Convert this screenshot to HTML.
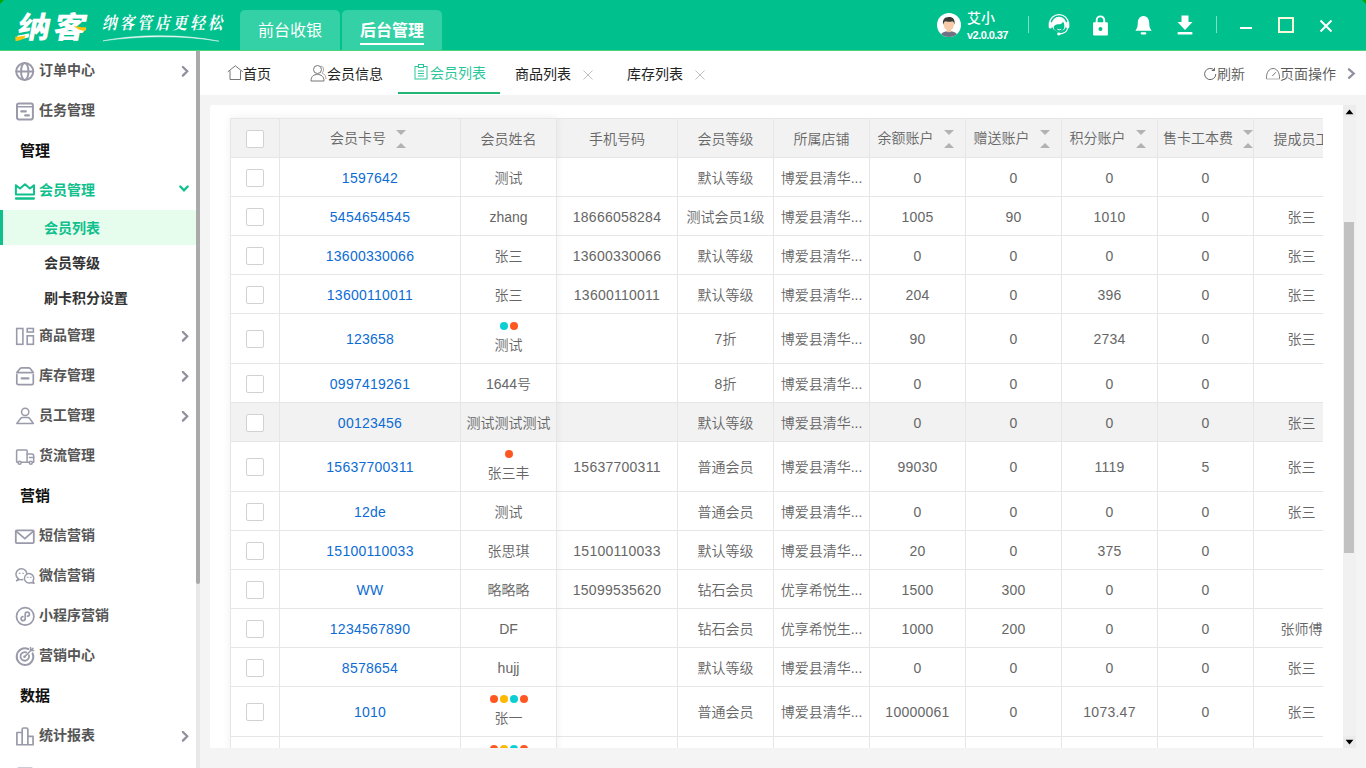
<!DOCTYPE html>
<html lang="zh-CN">
<head>
<meta charset="utf-8">
<title>纳客 - 会员列表</title>
<style>
*{box-sizing:border-box;margin:0;padding:0}
html,body{width:1366px;height:768px;overflow:hidden;background:#f4f4f4;font-family:"Liberation Sans","Noto Sans CJK SC",sans-serif;font-size:14px;color:#666;font-weight:350}
body{position:relative}
a{text-decoration:none;color:inherit}
ul{list-style:none}
#header{position:absolute;left:0;top:0;width:1366px;height:50px;background:#00c08d;overflow:hidden}
#hline{position:absolute;left:0;top:50px;width:1366px;height:1px;background:#4fd47e}
.htab{position:absolute;top:10px;height:40px;width:100px;background:#33d1a5;border-radius:5px 5px 0 0;color:#fff;font-size:16px;line-height:42px;text-align:center;font-weight:400}
.htab.on{font-weight:bold}
.htab.on i{position:absolute;left:18px;top:33px;width:64px;height:2px;background:#fff}
#logo{position:absolute;left:14px;top:4px;height:44px;line-height:44px;font-family:"Liberation Sans","Noto Sans CJK SC",sans-serif;font-weight:900;font-size:33px;color:#fff;letter-spacing:3px;white-space:nowrap;transform:scaleY(.91) skewX(-10deg);transform-origin:0 100%}
#slogan{position:absolute;left:102px;top:11px;height:26px;line-height:26px;transform:scaleX(.86);transform-origin:0 50%;font-family:"Liberation Serif","Noto Serif CJK SC",serif;font-style:italic;font-weight:700;font-size:17px;color:#fff;letter-spacing:3.5px;white-space:nowrap}
#user{position:absolute;left:967px;top:9px;color:#fff;white-space:nowrap}
#user b{display:block;font-weight:500;font-size:14px;line-height:18px}
#user span{display:block;font-size:11px;line-height:14px;letter-spacing:-0.55px;font-weight:bold;margin-top:1px}
.vsep{position:absolute;top:16px;width:1px;height:17px;background:#7fdfc4}
#sidebar{position:absolute;left:0;top:51px;width:196px;height:717px;background:#fff;overflow:hidden}
.mi{position:absolute;left:0;width:196px;height:40px;line-height:41px;font-weight:bold;color:#555;font-size:14px}
.mi .t{position:absolute;left:39px;top:0;white-space:nowrap}
.mi svg.ic{position:absolute;left:13px;top:9px;width:24px;height:24px}
.mi svg.ch{position:absolute;left:177px;top:13px;width:16px;height:16px}
.mi.on{color:#0fc08c}
.sec{position:absolute;left:20px;font-size:15px;font-weight:bold;color:#111;height:40px;line-height:41px}
.sub{position:absolute;left:0;width:196px;height:35px;line-height:36px;font-weight:bold;color:#333}
.sub .t{position:absolute;left:44px;top:0;white-space:nowrap}
.sub.on{background:#e6fcec;color:#0fc08c}
.sub.on i{position:absolute;left:0;top:0;width:3px;height:35px;background:#0fc08c}
#sbtrack{position:absolute;left:196px;top:51px;width:4px;height:717px;background:#e8e8e8}
#sbthumb{position:absolute;left:196px;top:51px;width:4px;height:533px;background:#aaa;border-radius:0 0 2px 2px}
#tabs{position:absolute;left:200px;top:51px;width:1166px;height:44px;background:#fff}
.tb{position:absolute;top:0;height:44px;line-height:47px;color:#222;font-size:14px;white-space:nowrap;font-weight:400}
.tb.r{color:#555;font-weight:350}
.tb.on{color:#2bc79b;line-height:45px}
.tbi{position:absolute}
#tabul{position:absolute;left:198px;top:41px;width:102px;height:2px;background:#22b573}
#panel{position:absolute;left:210px;top:105px;width:1133px;height:643px;background:#fff;border-radius:2px 0 0 2px;overflow:hidden}
#tw{position:absolute;left:20px;top:13px;width:1093px;height:630px;overflow:hidden;border-left:1px solid #e6e6e6;border-top:1px solid #e6e6e6}
#fx{position:absolute;left:20px;top:13px;width:327px;height:640px;box-shadow:0 -1px 8px rgba(0,0,0,.06);pointer-events:none}
table{border-collapse:separate;border-spacing:0;table-layout:fixed;width:1119px}
th,td{border-right:1px solid #e6e6e6;border-bottom:1px solid #e6e6e6;height:39px;text-align:center;font-weight:350;font-size:14px;color:#666;white-space:nowrap;overflow:hidden;padding:2px 5px 0;position:relative;vertical-align:middle;line-height:20px}
th{background:#f2f2f2}
tr.tag td{height:50px;padding-top:1px}
tr.hov td{background:#f2f2f2}
td.lk{color:#0c6cd4}
td.n,td.lk{letter-spacing:.25px}
.cb{display:inline-block;width:18px;height:18px;border:1px solid #d2d2d2;border-radius:2px;background:#fff;vertical-align:middle;position:relative;top:-1px}
.srt{display:inline-block;position:relative;width:10px;height:20px;margin-left:10px;margin-right:4px;vertical-align:middle;top:-1px}
.srt:before{content:"";position:absolute;left:0;top:1px;border:5px solid transparent;border-bottom:0;border-top-color:#b2b2b2}
.srt:after{content:"";position:absolute;left:0;top:14px;border:5px solid transparent;border-top:0;border-bottom-color:#b2b2b2}
.dots{position:absolute;left:0;top:8px;width:100%;height:8px;line-height:8px;font-size:0}
.dots i{display:inline-block;width:8px;height:8px;border-radius:50%;margin:0 1px}
.nm{position:absolute;left:0;top:21px;width:100%;height:20px;line-height:20px}
.c-o{background:#ff5722}.c-c{background:#0ccfd3}.c-y{background:#ffb800}
#vtrack{position:absolute;left:1343px;top:105px;width:13px;height:643px;background:#f1f1f1}
.vbtn{position:absolute;left:1343px;width:13px;height:12px;background:#ececec}
#vthumb{position:absolute;left:1344px;top:222px;width:10px;height:331px;background:#c1c1c1}
</style>
</head>
<body>

<div id="header">
  <div id="logo">纳客</div>
  <div id="slogan">纳客管店更轻松</div>
  <svg style="position:absolute;left:14px;top:24px" width="74" height="18" viewBox="0 0 74 18"><path d="M1.3 12.6 C4.5 12.8 8 12.3 11.5 11.5 L10.5 14 C7.5 16 4 17 1.5 16.9 Z" fill="#ffc20e"/><path d="M59.6 2.3 C63 1.5 66 4 72.1 3.2 L71.5 6.5 C66.5 7.5 63.5 4.5 59.6 2.3 Z" fill="#ffc20e"/></svg>
  <svg style="position:absolute;left:100px;top:32px" width="130" height="12" viewBox="0 0 130 12"><path d="M3 8.8 C 35 2.5, 80 1.3, 119 9.2 C 80 2.8, 40 4, 3 8.8 Z" fill="#fff" stroke="#fff" stroke-width=".5" stroke-linejoin="round" opacity=".92"/></svg>
  <div class="htab" style="left:240px">前台收银</div>
  <div class="htab on" style="left:342px">后台管理<i></i></div>
  <svg style="position:absolute;left:937px;top:13px" width="24" height="24" viewBox="0 0 24 24">
    <defs><clipPath id="avc"><circle cx="12" cy="12" r="12"/></clipPath></defs>
    <circle cx="12" cy="12" r="12" fill="#fff"/>
    <g clip-path="url(#avc)">
      <path d="M3.5 24 C3.5 19.5 7 18.2 12 18.2 C17 18.2 20.5 19.5 20.5 24 Z" fill="#6f7285"/>
      <rect x="10" y="15.5" width="4" height="3.6" fill="#f2c19e"/>
      <ellipse cx="11.8" cy="11.6" rx="5.2" ry="5.8" fill="#f7cba7"/>
      <path d="M6.2 11.8 C5 6.5 8 3.8 12 4 C15.5 3.8 18.5 6 17.4 11.8 C16.9 9.8 16.5 8.8 15.5 8.2 C13 9 9.5 8.7 8 8.2 C7 9 6.6 10 6.2 11.8 Z" fill="#3a3a3a"/>
    </g>
  </svg>
  <div id="user"><b>艾小</b><span>v2.0.0.37</span></div>
  <div class="vsep" style="left:1028px"></div>
  <svg style="position:absolute;left:1047px;top:12px" width="24" height="26" viewBox="0 0 24 26">
    <path d="M2.6 11.6 A9.4 9 0 0 1 21.4 11.6" fill="none" stroke="#fff" stroke-width="1.2"/>
    <circle cx="12" cy="12.2" r="7.4" fill="#fff"/>
    <path d="M6.7 14.8 C7.5 12.6 10 12.3 12.5 12.3 C14.5 12.2 15.6 11 16 9.6 C17 11 17.6 13 17.3 15 C17 17.8 15 20 12 20 C9 20 6.5 17.8 6.7 14.8 Z" fill="#00c08d"/>
    <path d="M10.3 17.2 Q12.2 18.6 14.2 17.2" fill="none" stroke="#fff" stroke-width="1"/>
    <rect x="1.7" y="9.8" width="3.2" height="6.6" rx="1.3" fill="#fff"/>
    <rect x="19.1" y="9.8" width="3.2" height="6.6" rx="1.3" fill="#fff"/>
    <path d="M20.6 16 C20.3 19.5 16.5 21.6 12.5 21.9" fill="none" stroke="#fff" stroke-width="1.2"/>
    <ellipse cx="11.8" cy="22" rx="1.7" ry="1.4" fill="#fff"/>
  </svg>
  <svg style="position:absolute;left:1090px;top:12px" width="22" height="26" viewBox="0 0 22 26">
    <path d="M6.65 11 V8.2 a3.8 3.8 0 0 1 7.6 0 V11" fill="none" stroke="#fff" stroke-width="1.9"/>
    <rect x="3" y="10.3" width="14.9" height="13.2" rx="1.3" fill="#fff"/>
    <circle cx="10.45" cy="16.9" r="2" fill="#00c08d"/>
  </svg>
  <svg style="position:absolute;left:1131.5px;top:12.5px" width="23" height="25" viewBox="0 0 24 26">
    <path d="M12 3 C7.5 3 6 7 6 11 C6 15 5 16.5 3.5 18.5 L20.5 18.5 C19 16.5 18 15 18 11 C18 7 16.5 3 12 3 Z" fill="#fff"/>
    <rect x="9" y="20" width="6" height="2.4" rx="1.2" fill="#fff"/>
  </svg>
  <svg style="position:absolute;left:1173px;top:12px" width="24" height="26" viewBox="0 0 24 26">
    <path d="M8.5 3.5 H15.5 V10 H19.5 L12 18 L4.5 10 H8.5 Z" fill="#fff"/>
    <rect x="4.5" y="20" width="15" height="2.5" rx="1" fill="#fff"/>
  </svg>
  <div class="vsep" style="left:1216px"></div>
  <div style="position:absolute;left:1240px;top:27px;width:12px;height:2px;background:#fff"></div>
  <div style="position:absolute;left:1278px;top:17px;width:16px;height:16px;border:2px solid #f6fbdc"></div>
  <svg style="position:absolute;left:1319px;top:19px" width="14" height="14" viewBox="0 0 14 14"><path d="M1.5 1.5 L12.5 12.5 M12.5 1.5 L1.5 12.5" stroke="#fff" stroke-width="2" fill="none"/></svg>
  <svg style="position:absolute;left:0;top:0" width="4" height="4" viewBox="0 0 5 5"><path d="M0 0 H5 L0 5 Z" fill="#00a800"/></svg>
  <svg style="position:absolute;left:1362px;top:0" width="4" height="4" viewBox="0 0 5 5"><path d="M0 0 H5 V5 Z" fill="#00a800"/></svg>
</div>
<div id="hline"></div>

<div id="sidebar">
<div class="mi" style="top:-1px"><svg class="ic" viewBox="0 0 24 24" fill="none" stroke="#9a9aab" stroke-width="2" stroke-linecap="round" stroke-linejoin="round"><circle cx="11.75" cy="12.45" r="8.5"/><ellipse cx="11.75" cy="12.45" rx="3.7" ry="8.5"/><path d="M3.3 12.45 H20.2"/></svg><span class="t">订单中心</span><svg class="ch" viewBox="0 0 16 16" fill="none" stroke="#9090a0" stroke-width="2.3" stroke-linecap="round" stroke-linejoin="miter"><path d="M5.9 4 L10.2 8.3 L5.9 12.6"/></svg></div>
<div class="mi" style="top:39px"><svg class="ic" viewBox="0 0 24 24" fill="none" stroke="#9a9aab" stroke-width="2" stroke-linecap="round" stroke-linejoin="round"><rect x="4" y="4.4" width="15.9" height="16" rx="1.8"/><path d="M4 7.7 H19.9" stroke-width="1.6"/><path d="M8.3 12.4 H12.8 M12.2 16.4 H15.9" stroke-width="2.2"/></svg><span class="t">任务管理</span></div>
<div class="sec" style="top:79px">管理</div>
<div class="mi on" style="top:119px"><svg class="ic" viewBox="0 0 24 24" fill="none" stroke="#0fc08c" stroke-width="2" stroke-linecap="round" stroke-linejoin="round"><path d="M2.9 6.2 V15.5 H21 V6.2 L16.9 9.5 L12 5.3 L7 9.5 Z"/><path d="M3.2 19.45 H20.7" stroke-width="2.6"/></svg><span class="t">会员管理</span><svg class="ch" viewBox="0 0 16 16" fill="none" stroke="#0fc08c" stroke-width="2.3" stroke-linecap="round" stroke-linejoin="miter"><path d="M3.3 3.5 L7 7.3 L10.7 3.5"/></svg></div>
<div class="sub on" style="top:159px"><i></i><span class="t">会员列表</span></div>
<div class="sub" style="top:194px"><span class="t">会员等级</span></div>
<div class="sub" style="top:229px"><span class="t">刷卡积分设置</span></div>
<div class="mi" style="top:264px"><svg class="ic" viewBox="0 0 24 24" fill="none" stroke="#9a9aab" stroke-width="2" stroke-linecap="round" stroke-linejoin="round"><g stroke-width="1.6" stroke-linejoin="miter"><rect x="3.7" y="4.5" width="6.2" height="15.8"/><rect x="14.2" y="4.5" width="6.2" height="3.5"/><rect x="14.2" y="11.8" width="6.2" height="8.5"/></g></svg><span class="t">商品管理</span><svg class="ch" viewBox="0 0 16 16" fill="none" stroke="#9090a0" stroke-width="2.3" stroke-linecap="round" stroke-linejoin="miter"><path d="M5.9 4 L10.2 8.3 L5.9 12.6"/></svg></div>
<div class="mi" style="top:304px"><svg class="ic" viewBox="0 0 24 24" fill="none" stroke="#9a9aab" stroke-width="2" stroke-linecap="round" stroke-linejoin="round"><g stroke-width="1.7"><path d="M3.8 8.6 L7.3 4.3 Q7.8 3.9 8.5 3.9 H15.8 Q16.5 3.9 17 4.3 L20.3 8.6 Z"/><path d="M3.8 10.6 V19.2 a1.5 1.5 0 0 0 1.5 1.5 H18.8 a1.5 1.5 0 0 0 1.5 -1.5 V10.6"/></g><path d="M8.7 14.4 H15.4" stroke-width="2.3"/></svg><span class="t">库存管理</span><svg class="ch" viewBox="0 0 16 16" fill="none" stroke="#9090a0" stroke-width="2.3" stroke-linecap="round" stroke-linejoin="miter"><path d="M5.9 4 L10.2 8.3 L5.9 12.6"/></svg></div>
<div class="mi" style="top:344px"><svg class="ic" viewBox="0 0 24 24" fill="none" stroke="#9a9aab" stroke-width="2" stroke-linecap="round" stroke-linejoin="round"><g stroke-width="1.5"><circle cx="12.2" cy="7.85" r="3.65"/><path d="M3.8 19.5 L7.8 14.2 Q8.3 13.6 9.3 13.6 H15 Q16 13.6 16.5 14.2 L20.4 19.5 Z"/></g></svg><span class="t">员工管理</span><svg class="ch" viewBox="0 0 16 16" fill="none" stroke="#9090a0" stroke-width="2.3" stroke-linecap="round" stroke-linejoin="miter"><path d="M5.9 4 L10.2 8.3 L5.9 12.6"/></svg></div>
<div class="mi" style="top:384px"><svg class="ic" viewBox="0 0 24 24" fill="none" stroke="#9a9aab" stroke-width="2" stroke-linecap="round" stroke-linejoin="round"><g stroke-width="1.5"><rect x="3.6" y="5.9" width="10.5" height="12.3" rx=".8"/><path d="M14.1 9.9 H18.7 a2 2 0 0 1 2 2 V18.2 H14.1"/><path d="M16.5 13.6 H20.7"/><circle cx="6.6" cy="18.7" r="1.5" fill="#fff"/><circle cx="17.8" cy="18.7" r="1.5" fill="#fff"/></g></svg><span class="t">货流管理</span></div>
<div class="sec" style="top:424px">营销</div>
<div class="mi" style="top:464px"><svg class="ic" viewBox="0 0 24 24" fill="none" stroke="#9a9aab" stroke-width="2" stroke-linecap="round" stroke-linejoin="round"><g stroke-width="1.8"><rect x="2.8" y="6.4" width="18" height="12.7" rx="1"/><path d="M3.4 7.4 L11.8 14.6 L20.2 7.4" stroke-linejoin="miter"/></g></svg><span class="t">短信营销</span></div>
<div class="mi" style="top:504px"><svg class="ic" viewBox="0 0 24 24" fill="none" stroke="#9a9aab" stroke-width="2" stroke-linecap="round" stroke-linejoin="round"><g stroke-width="1.5"><path d="M5.25 14.7 A5.5 5.5 0 1 1 13.82 9.25"/><path d="M5.25 14.7 L3.6 16.8 L6.52 15.37 A5.5 5.5 0 0 0 9.82 15.51"/><path d="M19.95 17 A4.7 4.7 0 1 0 18.09 18.56 L21 19.4 Z"/><path d="M6.2 9.3 H7.2 M9.7 9.3 H10.7 M14.2 13.3 H15.2 M17.3 13.3 H18.3" stroke-width="1.1"/></g></svg><span class="t">微信营销</span></div>
<div class="mi" style="top:544px"><svg class="ic" viewBox="0 0 24 24" fill="none" stroke="#9a9aab" stroke-width="2" stroke-linecap="round" stroke-linejoin="round"><circle cx="12.2" cy="12.4" r="8.7" stroke-width="1.7"/><path d="M12.2 14.9 V10.3 a2.1 2.1 0 0 1 4.2 0 a1.9 1.9 0 0 1 -1.9 1.9 M12.2 10 V14.6 a2.1 2.1 0 0 1 -4.2 0 a1.9 1.9 0 0 1 1.9 -1.9" stroke-width="1.7"/></svg><span class="t">小程序营销</span></div>
<div class="mi" style="top:584px"><svg class="ic" viewBox="0 0 24 24" fill="none" stroke="#9a9aab" stroke-width="2" stroke-linecap="round" stroke-linejoin="round"><path d="M19.6 9.3 A8.3 8.3 0 1 1 15.2 5" stroke-width="2"/><path d="M15.9 11.2 A4.3 4.3 0 1 1 13.2 8.4" stroke-width="1.8"/><circle cx="11.5" cy="12.8" r="1.3" fill="#9a9aab" stroke="none"/><path d="M11.7 12.6 L20 4.3 M17.5 3.6 V6.6 H20.6" stroke-width="1.5"/></svg><span class="t">营销中心</span></div>
<div class="sec" style="top:624px">数据</div>
<div class="mi" style="top:664px"><svg class="ic" viewBox="0 0 24 24" fill="none" stroke="#9a9aab" stroke-width="2" stroke-linecap="round" stroke-linejoin="round"><path d="M3.9 20.75 V8.5 H9.15 M9.15 20.75 V5.5 a1.5 1.5 0 0 1 1.5 -1.5 H13.35 a1.5 1.5 0 0 1 1.5 1.5 V20.75 M14.85 12.4 H20.05 V20.75 H3.9" stroke-width="1.7"/></svg><span class="t">统计报表</span><svg class="ch" viewBox="0 0 16 16" fill="none" stroke="#9090a0" stroke-width="2.3" stroke-linecap="round" stroke-linejoin="miter"><path d="M5.9 4 L10.2 8.3 L5.9 12.6"/></svg></div>
<div class="mi" style="top:704px"><svg class="ic" viewBox="0 0 24 24" fill="none" stroke="#9a9aab" stroke-width="2" stroke-linecap="round" stroke-linejoin="round"><rect x="4" y="4.4" width="15.9" height="16" rx="1.8"/><path d="M4 7.7 H19.9" stroke-width="1.6"/><path d="M8.3 12.4 H12.8 M12.2 16.4 H15.9" stroke-width="2.2"/></svg><span class="t"></span></div>
</div>
<div id="sbtrack"></div><div id="sbthumb"></div>

<div id="tabs">
<svg class="tbi" style="left:27px;top:13px" width="17" height="17" viewBox="0 0 17 17" fill="none" stroke="#777" stroke-width="1"><path d="M0.8 7.8 L8.3 1.8 L15.8 7.8 M3 6.5 V15.5 H13.5 V6.5"/></svg><div class="tb" style="left:43px">首页</div>
<svg class="tbi" style="left:110px;top:13px" width="17" height="18" viewBox="0 0 17 18" fill="none" stroke="#777" stroke-width="1"><circle cx="7.5" cy="5.5" r="4"/><path d="M1 17 C1 12 4 10.5 7.5 10.5 C11 10.5 14 12 14 17 Z"/><path d="M11 2 C14 2.5 14.5 7 12 9 C14.5 10 16 12 16 15" stroke="#aaa"/></svg><div class="tb" style="left:127px">会员信息</div>
<svg class="tbi" style="left:214px;top:13px" width="14" height="16" viewBox="0 0 14 16" fill="none" stroke="#2bc79b" stroke-width="1"><rect x="1" y="2.5" width="12" height="12.5"/><rect x="4.5" y=".5" width="5" height="3" fill="#fff"/><path d="M4 7 H10 M4 9.5 H10 M4 12 H10"/></svg><div class="tb on" style="left:230px">会员列表</div>
<div id="tabul"></div>
<div class="tb" style="left:315px">商品列表</div>
<svg class="tbi" style="left:382px;top:18px" width="12" height="12" viewBox="0 0 12 12" fill="none" stroke="#c0c0c0" stroke-width="1"><path d="M1.5 1.5 L10.5 10.5 M10.5 1.5 L1.5 10.5"/></svg><div class="tb" style="left:427px">库存列表</div>
<svg class="tbi" style="left:494px;top:18px" width="12" height="12" viewBox="0 0 12 12" fill="none" stroke="#c0c0c0" stroke-width="1"><path d="M1.5 1.5 L10.5 10.5 M10.5 1.5 L1.5 10.5"/></svg><svg class="tbi" style="left:1003px;top:16px" width="14" height="14" viewBox="0 0 14 14" fill="none" stroke="#666" stroke-width="1"><path d="M11.3 3.2 A5.6 5.6 0 1 0 12.8 7"/><path d="M11.5 0.8 V3.5 H8.8"/></svg><div class="tb r" style="left:1017px">刷新</div>
<svg class="tbi" style="left:1065px;top:16px" width="16" height="14" viewBox="0 0 16 14" fill="none" stroke="#777" stroke-width="1"><path d="M1.5 12 C1 5 4.5 1.5 8 1.5 C11.5 1.5 15 5 14.5 12"/><path d="M1.5 12 H14.5" stroke="#ccc" stroke-width="1.5"/><path d="M7.3 9 L10.8 5.3"/></svg><div class="tb r" style="left:1080px">页面操作</div>
<svg class="tbi" style="left:1145px;top:14px" width="12" height="16" viewBox="0 0 12 16" fill="none" stroke="#9090a0" stroke-width="2.3"><path d="M4 4.3 L8.7 8.5 L4 12.8" stroke-linecap="round" stroke-linejoin="miter"/></svg></div>

<div id="panel">
<div id="tw">
<table>
<colgroup><col style="width:49px"><col style="width:181px"><col style="width:96px"><col style="width:121px"><col style="width:96px"><col style="width:96px"><col style="width:96px"><col style="width:96px"><col style="width:96px"><col style="width:96px"><col style="width:96px"></colgroup>
<thead><tr><th><span class="cb"></span></th><th><span>会员卡号</span><span class="srt"></span></th><th><span>会员姓名</span></th><th><span>手机号码</span></th><th><span>会员等级</span></th><th><span>所属店铺</span></th><th><span>余额账户</span><span class="srt"></span></th><th><span>赠送账户</span><span class="srt"></span></th><th><span>积分账户</span><span class="srt"></span></th><th><span>售卡工本费</span><span class="srt"></span></th><th><span>提成员工</span></th></tr></thead>
<tbody>
<tr><td><span class="cb"></span></td><td class="lk">1597642</td><td>测试</td><td></td><td>默认等级</td><td>博爱县清华...</td><td>0</td><td>0</td><td>0</td><td>0</td><td></td></tr>
<tr><td><span class="cb"></span></td><td class="lk">5454654545</td><td>zhang</td><td class="n">18666058284</td><td>测试会员1级</td><td>博爱县清华...</td><td class="n">1005</td><td class="n">90</td><td class="n">1010</td><td>0</td><td>张三</td></tr>
<tr><td><span class="cb"></span></td><td class="lk">13600330066</td><td>张三</td><td class="n">13600330066</td><td>默认等级</td><td>博爱县清华...</td><td>0</td><td>0</td><td>0</td><td>0</td><td>张三</td></tr>
<tr><td><span class="cb"></span></td><td class="lk">13600110011</td><td>张三</td><td class="n">13600110011</td><td>默认等级</td><td>博爱县清华...</td><td class="n">204</td><td>0</td><td class="n">396</td><td>0</td><td>张三</td></tr>
<tr class="tag"><td><span class="cb"></span></td><td class="lk">123658</td><td><span class="dots"><i class="c-c"></i><i class="c-o"></i></span><span class="nm">测试</span></td><td></td><td>7折</td><td>博爱县清华...</td><td class="n">90</td><td>0</td><td class="n">2734</td><td>0</td><td>张三</td></tr>
<tr><td><span class="cb"></span></td><td class="lk">0997419261</td><td>1644号</td><td></td><td>8折</td><td>博爱县清华...</td><td>0</td><td>0</td><td>0</td><td>0</td><td></td></tr>
<tr class="hov"><td><span class="cb"></span></td><td class="lk">00123456</td><td>测试测试测试</td><td></td><td>默认等级</td><td>博爱县清华...</td><td>0</td><td>0</td><td>0</td><td>0</td><td>张三</td></tr>
<tr class="tag"><td><span class="cb"></span></td><td class="lk">15637700311</td><td><span class="dots"><i class="c-o"></i></span><span class="nm">张三丰</span></td><td class="n">15637700311</td><td>普通会员</td><td>博爱县清华...</td><td class="n">99030</td><td>0</td><td class="n">1119</td><td>5</td><td>张三</td></tr>
<tr><td><span class="cb"></span></td><td class="lk">12de</td><td>测试</td><td></td><td>普通会员</td><td>博爱县清华...</td><td>0</td><td>0</td><td>0</td><td>0</td><td>张三</td></tr>
<tr><td><span class="cb"></span></td><td class="lk">15100110033</td><td>张思琪</td><td class="n">15100110033</td><td>默认等级</td><td>博爱县清华...</td><td class="n">20</td><td>0</td><td class="n">375</td><td>0</td><td></td></tr>
<tr><td><span class="cb"></span></td><td class="lk">WW</td><td>略略略</td><td class="n">15099535620</td><td>钻石会员</td><td>优享希悦生...</td><td class="n">1500</td><td class="n">300</td><td>0</td><td>0</td><td></td></tr>
<tr><td><span class="cb"></span></td><td class="lk">1234567890</td><td>DF</td><td></td><td>钻石会员</td><td>优享希悦生...</td><td class="n">1000</td><td class="n">200</td><td>0</td><td>0</td><td>张师傅</td></tr>
<tr><td><span class="cb"></span></td><td class="lk">8578654</td><td>hujj</td><td></td><td>默认等级</td><td>博爱县清华...</td><td>0</td><td>0</td><td>0</td><td>0</td><td>张三</td></tr>
<tr class="tag"><td><span class="cb"></span></td><td class="lk">1010</td><td><span class="dots"><i class="c-o"></i><i class="c-y"></i><i class="c-c"></i><i class="c-o"></i></span><span class="nm">张一</span></td><td></td><td>普通会员</td><td>博爱县清华...</td><td class="n">10000061</td><td>0</td><td class="n">1073.47</td><td>0</td><td>张三</td></tr>
<tr class="tag"><td><span class="cb"></span></td><td class="lk"></td><td><span class="dots"><i class="c-o"></i><i class="c-y"></i><i class="c-c"></i><i class="c-o"></i></span><span class="nm"></span></td><td></td><td></td><td></td><td></td><td></td><td></td><td></td><td></td></tr>
</tbody>
</table>
</div>
<div id="fx"></div>
</div>
<div id="vtrack"></div><div id="vthumb"></div>
<div class="vbtn" style="top:105px"></div><div class="vbtn" style="top:736px"></div>
<svg style="position:absolute;left:1343px;top:105px" width="13" height="12" viewBox="0 0 13 12"><path d="M2.6 9.2 L6.5 4.4 L10.4 9.2 Z" fill="#000"/></svg>
<svg style="position:absolute;left:1343px;top:736px" width="13" height="12" viewBox="0 0 13 12"><path d="M2.6 3.8 L6.5 8.5 L10.4 3.8 Z" fill="#000"/></svg>

</body>
</html>
